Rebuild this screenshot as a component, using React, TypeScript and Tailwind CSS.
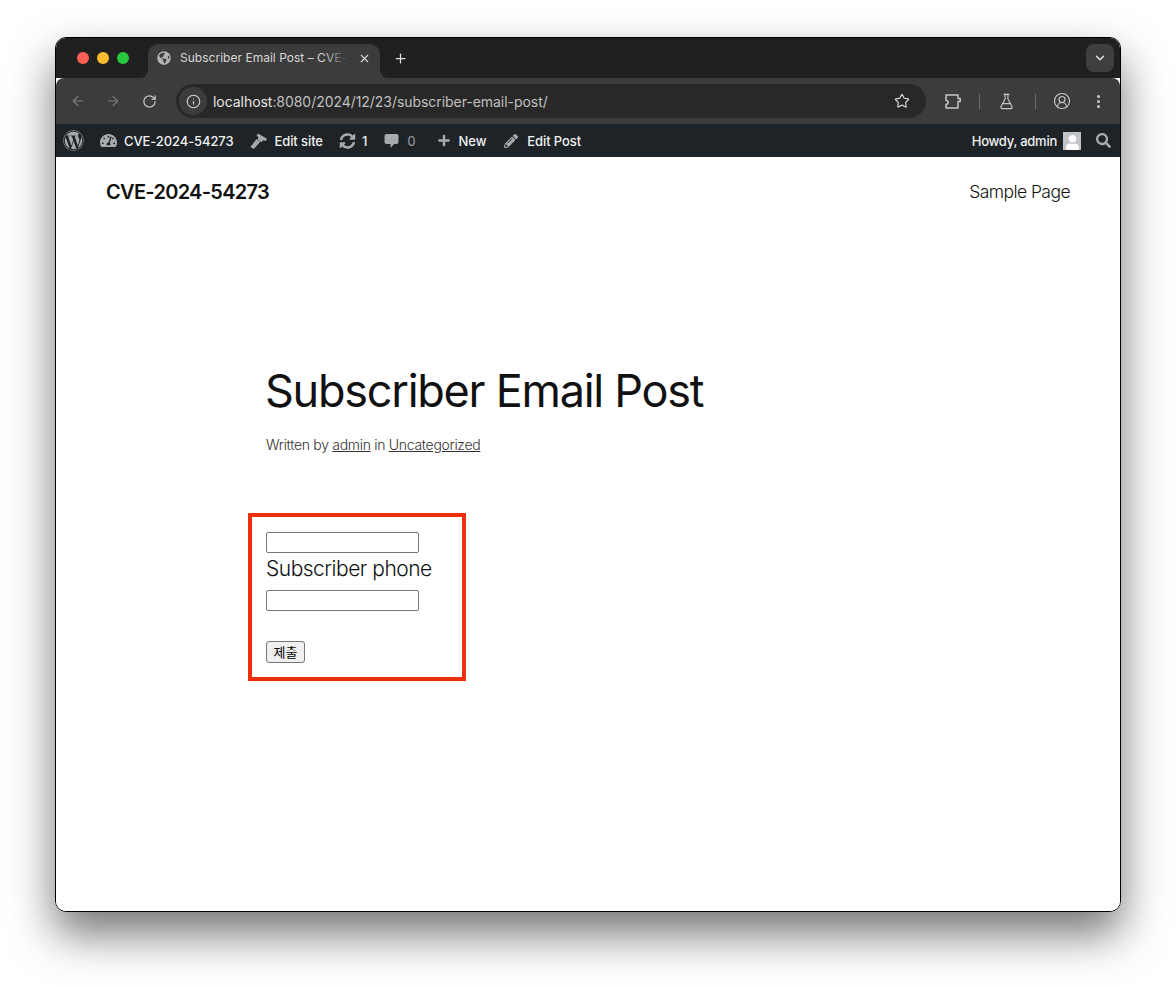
import React from "react";
import {
  ArrowLeft,
  ArrowRight,
  ChevronDown,
  CircleUserRound,
  EllipsisVertical,
  FlaskConical,
  Info,
  Plus,
  RotateCw,
  Star,
  X,
} from "lucide-react";
import {
  FaGlobeAmericas,
  FaPencilAlt,
  FaPlus,
  FaSearch,
  FaSyncAlt,
  FaTachometerAlt,
  FaUser,
  FaWordpress,
} from "react-icons/fa";

function ExtensionIcon() {
  return (
    <svg width="18" height="18" viewBox="0 0 18 18" fill="none" stroke="#c7c7c7" strokeWidth="1.5" strokeLinejoin="round">
      <path d="M2 3h12v3.500h2.200v3H14V16H2v-3.600c1.600 0 2.200-.8 2.200-1.900S3.600 8.600 2 8.600z" />
    </svg>
  );
}

function HammerIcon() {
  return (
    <svg width="19" height="18" viewBox="0 0 19 18" fill="#a7aaad" className="mr-[7px]">
      <path d="M9 1.500l9 5.200-1.300 2.200-2.800-.7-1.200 2.100-4.400-2.700 1.200-2.100-1.800-2.100z" />
      <path d="M7.300 7.300l4 2.500-6.500 7.200-3.300-2.100z" />
    </svg>
  );
}

function CommentIcon() {
  return (
    <svg width="15" height="16" viewBox="0 0 15 16" fill="#a7aaad">
      <path d="M2.500 1h10A2 2 0 0 1 14.500 3v6a2 2 0 0 1-2 2H10l-3.500 4v-4h-4a2 2 0 0 1-2-2V3a2 2 0 0 1 2-2z" />
    </svg>
  );
}

function TabStrip() {
  return (
    <div className="flex h-[40px] items-end bg-[#202020] pl-[92px] pr-[6px]">
      <div className="relative flex h-[34px] w-[232px] items-center rounded-t-[10px] bg-[#3c3c3c] pb-[6px] pl-[9px] pr-[9px]">
        <svg width="8" height="8" viewBox="0 0 8 8" className="absolute bottom-0 left-[-8px]" fill="#3c3c3c">
          <path d="M8 0v8H0a8 8 0 0 0 8-8z" />
        </svg>
        <svg width="8" height="8" viewBox="0 0 8 8" className="absolute bottom-0 right-[-8px]" fill="#3c3c3c">
          <path d="M0 0v8h8a8 8 0 0 1-8-8z" />
        </svg>
        <FaGlobeAmericas className="h-[14px] w-[14px] text-[#b4b4b4]" />
        <span className="ml-[9px] w-[168px] overflow-hidden whitespace-nowrap text-[12px] tracking-[0.02px] text-[#d6d6d6]">
          Subscriber Email Post – CVE-
        </span>
        <div className="absolute left-[176px] top-[6px] h-[18px] w-[24px] bg-gradient-to-r from-transparent to-[#3c3c3c]" />
        <X size={13} strokeWidth={2} className="ml-auto text-[#d8d8d8]" />
      </div>
      <div className="mb-[12px] ml-[13px]">
        <Plus size={15} strokeWidth={2} className="text-[#e0e0e0]" />
      </div>
      <div className="mb-[6px] ml-auto flex h-[28px] w-[28px] items-center justify-center rounded-[8px] bg-[#3f3f3f]">
        <ChevronDown size={14} strokeWidth={2.4} className="text-[#e6e6e6]" />
      </div>
    </div>
  );
}

function Toolbar() {
  return (
    <div className="flex h-[46px] items-center rounded-t-[8px] bg-[#3c3c3c] pl-[14px] pr-[13px]">
      <ArrowLeft size={16} strokeWidth={1.8} className="text-[#7c7c7c]" />
      <ArrowRight size={16} strokeWidth={1.8} className="ml-[19px] text-[#7c7c7c]" />
      <RotateCw size={15} strokeWidth={2} className="ml-[21px] text-[#c7c7c7]" />
      <div className="ml-[19px] flex h-[34px] w-[750px] items-center rounded-full bg-[#282828] pl-[3px] pr-[16px]">
        <div className="flex h-[28px] w-[28px] items-center justify-center rounded-full bg-[#3c3c3c]">
          <Info size={15} strokeWidth={1.8} className="text-[#d4d4d4]" />
        </div>
        <span className="ml-[6px] text-[14px] tracking-[-0.05px] text-[#c0c0c0]">
          <span className="text-[#e6e6e6]">localhost</span>:8080/2024/12/23/subscriber-email-post/
        </span>
        <Star size={16} strokeWidth={1.8} className="ml-auto text-[#d0d0d0]" />
      </div>
      <div className="ml-[18px] flex flex-1 items-center">
        <ExtensionIcon />
        <div className="ml-[17px] h-[15px] w-px bg-[#6a6a6a]" />
        <FlaskConical size={17} strokeWidth={1.6} className="ml-[18px] text-[#c7c7c7]" />
        <div className="ml-[20px] h-[15px] w-px bg-[#6a6a6a]" />
        <CircleUserRound size={18} strokeWidth={1.6} className="ml-[17px] text-[#c7c7c7]" />
        <EllipsisVertical size={17} strokeWidth={2.4} className="ml-auto text-[#c7c7c7]" />
      </div>
    </div>
  );
}

function AdminItem({ icon, label, className }: { icon: React.ReactNode; label: string; className?: string }) {
  return (
    <div className={`flex items-center ${className ?? ""}`}>
      {icon}
      <span className="pt-[2px] text-[13px] font-medium tracking-[-0.1px] text-[#f0f0f1]">{label}</span>
    </div>
  );
}

function AdminBar() {
  return (
    <div className="flex h-[33px] items-center bg-[#1d2327] pl-[7px] pr-[9px]">
      <FaWordpress className="h-[21px] w-[21px] text-[#a7aaad]" />
      <AdminItem
        className="ml-[16px]"
        icon={<FaTachometerAlt className="mr-[7px] h-[17px] w-[17px] text-[#a7aaad]" />}
        label="CVE-2024-54273"
      />
      <AdminItem className="ml-[15px]" icon={<HammerIcon />} label="Edit site" />
      <AdminItem
        className="ml-[16px]"
        icon={<FaSyncAlt className="mr-[6px] h-[16px] w-[17px] text-[#a7aaad]" />}
        label="1"
      />
      <div className="ml-[17px] flex items-center">
        <CommentIcon />
        <span className="ml-[8px] pt-[2px] text-[13px] font-medium text-[#8a8d90]">0</span>
      </div>
      <AdminItem
        className="ml-[21px]"
        icon={<FaPlus className="mr-[8px] h-[13px] w-[14px] text-[#a7aaad]" />}
        label="New"
      />
      <AdminItem
        className="ml-[18px]"
        icon={<FaPencilAlt className="mr-[9px] h-[14px] w-[14px] text-[#a7aaad]" />}
        label="Edit Post"
      />
      <div className="ml-auto flex items-center">
        <span className="pt-[2px] text-[13px] font-medium tracking-[-0.25px] text-[#f0f0f1]">Howdy, admin</span>
        <div className="ml-[6px] flex h-[18px] w-[18px] items-end justify-center overflow-hidden bg-[#c3c4c7]">
          <FaUser className="h-[15px] w-[15px] text-white" />
        </div>
        <FaSearch className="ml-[15px] h-[15px] w-[15px] text-[#a7aaad]" />
      </div>
    </div>
  );
}

function PostContent() {
  return (
    <div className="flex h-[754px] flex-col bg-white text-[#111111]">
      <div className="flex h-[71px] items-center justify-between pl-[50px] pr-[50px]">
        <span className="pb-[2px] text-[20px] font-semibold tracking-[-0.7px]">CVE-2024-54273</span>
        <span className="text-[17.500px] font-light tracking-[-0.55px]">Sample Page</span>
      </div>
      <div className="pl-[192px]">
        <div className="ml-[18px] mt-[136px]">
          <h1 className="-ml-px text-[45px] font-normal leading-[54px] tracking-[-1.250px]">Subscriber Email Post</h1>
          <p className="mt-[17px] text-[14px] font-light leading-[20px] tracking-[-0.3px] text-[#333333]">
            Written by <span className="underline">admin</span> in <span className="underline">Uncategorized</span>
          </p>
        </div>
        <form className="mt-[58px] h-[168px] w-[218px] border-4 border-[#ee2f0c] pl-[14px] pt-[15px]">
          <input className="block h-[21px] w-[153px] rounded-[2px] border border-[#767676] bg-white" />
          <div className="text-[21px] font-light leading-[32px] tracking-[-0.5px]">Subscriber phone</div>
          <input className="mt-[5px] block h-[21px] w-[153px] rounded-[2px] border border-[#767676] bg-white" />
          <button
            type="button"
            className="mt-[30px] block h-[22px] w-[39px] rounded-[3px] border border-[#767676] bg-[#efefef] text-[13px] font-normal leading-none text-black"
          >
            제출
          </button>
        </form>
      </div>
    </div>
  );
}

export default function App() {
  return (
    <div
      className="h-[985px] overflow-hidden bg-white pl-[55px] pt-[37px]"
      style={{ fontFamily: 'Inter, "Noto Sans CJK KR", sans-serif' }}
    >
      <div className="relative w-[1066px] overflow-hidden rounded-[11px] border border-black shadow-[0_22px_45px_rgba(0,0,0,0.55)]">
        <TabStrip />
        <Toolbar />
        <AdminBar />
        <PostContent />
        <div className="absolute left-[21px] top-[14px] flex gap-[8px]">
          <span className="h-[12px] w-[12px] rounded-full bg-[#ff5f57]" />
          <span className="h-[12px] w-[12px] rounded-full bg-[#febc2e]" />
          <span className="h-[12px] w-[12px] rounded-full bg-[#28c840]" />
        </div>
      </div>
    </div>
  );
}
